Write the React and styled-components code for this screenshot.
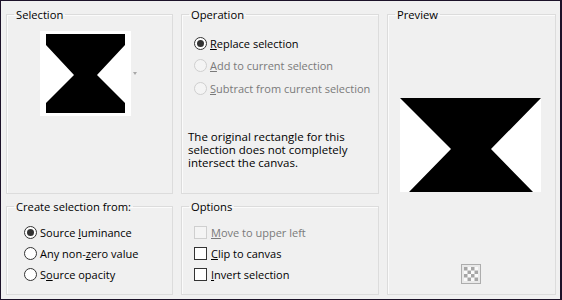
import React from "react";
import styled, { createGlobalStyle } from "styled-components";

const Global = createGlobalStyle`
  html, body { margin: 0; padding: 0; background: #1c1229; }
  body { font-family: "Open Sans", "Noto Sans", sans-serif; font-size: 11px; color: #000; }
  * { box-sizing: border-box; }
`;

const Window = styled.div`
  width: 562px;
  height: 300px;
  border-style: solid;
  border-color: #1c1229;
  border-width: 1px 2px 1px 1px;
  background: #f0f0f0;
  padding: 6px 5px 4px 5px;
  display: grid;
  grid-template-columns: 167px 198px 169px;
  grid-template-rows: 187px 96px;
  column-gap: 8px;
  row-gap: 5px;
`;

const Group = styled.fieldset`
  margin: 0;
  min-width: 0;
  border: 1px solid #dcdcdc;
  box-shadow: inset 1px 1px 0 #fbfbfb;
  padding: ${(p) => p.$pad || "0"};
  grid-column: ${(p) => p.$col};
  grid-row: ${(p) => p.$row};
  display: flex;
  flex-direction: column;
`;

const Title = styled.legend`
  margin-left: 7px;
  padding: 0 2px 0 2px;
  font-size: 11.2px;
  line-height: 15px;
  color: #000;
`;

const ThumbRow = styled.div`
  display: flex;
  align-items: center;
  justify-content: center;
  gap: 2px;
  margin-left: -2px;
`;

const DropArrow = styled.span`
  width: 0;
  height: 0;
  border-left: 2.5px solid transparent;
  border-right: 2.5px solid transparent;
  border-top: 3px solid #a8a8a8;
`;

const OptionList = styled.div`
  display: flex;
  flex-direction: column;
  padding-left: ${(p) => p.$indent || "0"};
`;

const OptionRow = styled.label`
  display: flex;
  align-items: center;
  gap: 3px;
  height: ${(p) => p.$h || "21px"};
  color: ${(p) => (p.$disabled ? "#7a7a7a" : "#000")};
  font-size: 11px;
  white-space: nowrap;
  u { text-decoration: underline; text-underline-offset: 1px; }
`;

const RadioCircle = styled.span`
  width: 13px;
  height: 13px;
  border-radius: 50%;
  border: 1px solid ${(p) => (p.$disabled ? "#cfcfcf" : "#333")};
  background: ${(p) => (p.$disabled ? "#f4f4f4" : "#fff")};
  display: flex;
  align-items: center;
  justify-content: center;
  flex: none;
  &::after {
    content: "";
    display: ${(p) => (p.$checked ? "block" : "none")};
    width: 7px;
    height: 7px;
    border-radius: 50%;
    background: #333;
  }
`;

const CheckSquare = styled.span`
  width: 13px;
  height: 13px;
  border: 1px solid ${(p) => (p.$disabled ? "#cfcfcf" : "#333")};
  background: ${(p) => (p.$disabled ? "#f4f4f4" : "#fff")};
  flex: none;
  margin-right: 1px;
`;

const Note = styled.p`
  margin: 30px 0 0 6px;
  font-size: 11.5px;
  line-height: 13.3px;
  color: #000;
`;

const PreviewArea = styled.div`
  flex: 1;
  display: flex;
  align-items: center;
  justify-content: center;
  padding-top: 3px;
  margin-left: -2px;
`;

const IconButton = styled.div`
  align-self: center;
  width: 20px;
  height: 20px;
  border: 1px solid #adadad;
  background: #e9e9e9;
  display: flex;
  align-items: center;
  justify-content: center;
  margin: 0 0 10px -2px;
`;

function Radio({ checked, disabled, children, h }) {
  return (
    <OptionRow $disabled={disabled} $h={h}>
      <RadioCircle $checked={checked} $disabled={disabled} />
      <span>{children}</span>
    </OptionRow>
  );
}

function Check({ disabled, children }) {
  return (
    <OptionRow $disabled={disabled}>
      <CheckSquare $disabled={disabled} />
      <span>{children}</span>
    </OptionRow>
  );
}

function SelectionThumb() {
  return (
    <svg width="91" height="85" viewBox="0 0 91 85">
      <rect width="91" height="85" fill="#fff" />
      <polygon
        points="6,3 85,3 85,14 57,44 85,72 85,82 6,82 6,72 34,44 6,14"
        fill="#000"
      />
    </svg>
  );
}

function PreviewImage() {
  return (
    <svg width="141" height="94" viewBox="0 0 141 94">
      <rect width="141" height="94" fill="#fff" />
      <polygon points="0,0 141,0 91,51 133,94 9,94 51,51" fill="#000" />
    </svg>
  );
}

function CheckerIcon() {
  const cells = [];
  for (let r = 0; r < 4; r++) {
    for (let c = 0; c < 4; c++) {
      if ((r + c) % 2 === 0) {
        cells.push(<rect key={`${r}-${c}`} x={c * 3.5} y={r * 3.5} width="3.5" height="3.5" fill="#a6a6a6" />);
      }
    }
  }
  return (
    <svg width="14" height="14" viewBox="0 0 14 14">
      <rect width="14" height="14" fill="#fafafa" />
      {cells}
    </svg>
  );
}

export default function App() {
  return (
    <>
      <Global />
      <Window>
        <Group $col="1" $row="1" $pad="9px 0 0 0">
          <Title>Selection</Title>
          <ThumbRow>
            <SelectionThumb />
            <DropArrow />
          </ThumbRow>
        </Group>

        <Group $col="2" $row="1" $pad="10px 0 0 0">
          <Title>Operation</Title>
          <OptionList $indent="12px">
            <Radio checked h="22.5px"><u>R</u>eplace selection</Radio>
            <Radio disabled h="22.5px"><u>A</u>dd to current selection</Radio>
            <Radio disabled h="22.5px"><u>S</u>ubtract from current selection</Radio>
          </OptionList>
          <Note>
            The original rectangle for this selection does not completely intersect the canvas.
          </Note>
        </Group>

        <Group $col="3" $row="1 / span 2" $pad="0">
          <Title>Preview</Title>
          <PreviewArea>
            <PreviewImage />
          </PreviewArea>
          <IconButton>
            <CheckerIcon />
          </IconButton>
        </Group>

        <Group $col="1" $row="2" $pad="8px 0 0 0">
          <Title>Create selection from:</Title>
          <OptionList $indent="17px">
            <Radio checked>Source <u>l</u>uminance</Radio>
            <Radio>Any non-<u>z</u>ero value</Radio>
            <Radio>S<u>o</u>urce opacity</Radio>
          </OptionList>
        </Group>

        <Group $col="2" $row="2" $pad="8px 0 0 0">
          <Title>Options</Title>
          <OptionList $indent="12px">
            <Check disabled><u>M</u>ove to upper left</Check>
            <Check><u>C</u>lip to canvas</Check>
            <Check><u>I</u>nvert selection</Check>
          </OptionList>
        </Group>
      </Window>
    </>
  );
}
